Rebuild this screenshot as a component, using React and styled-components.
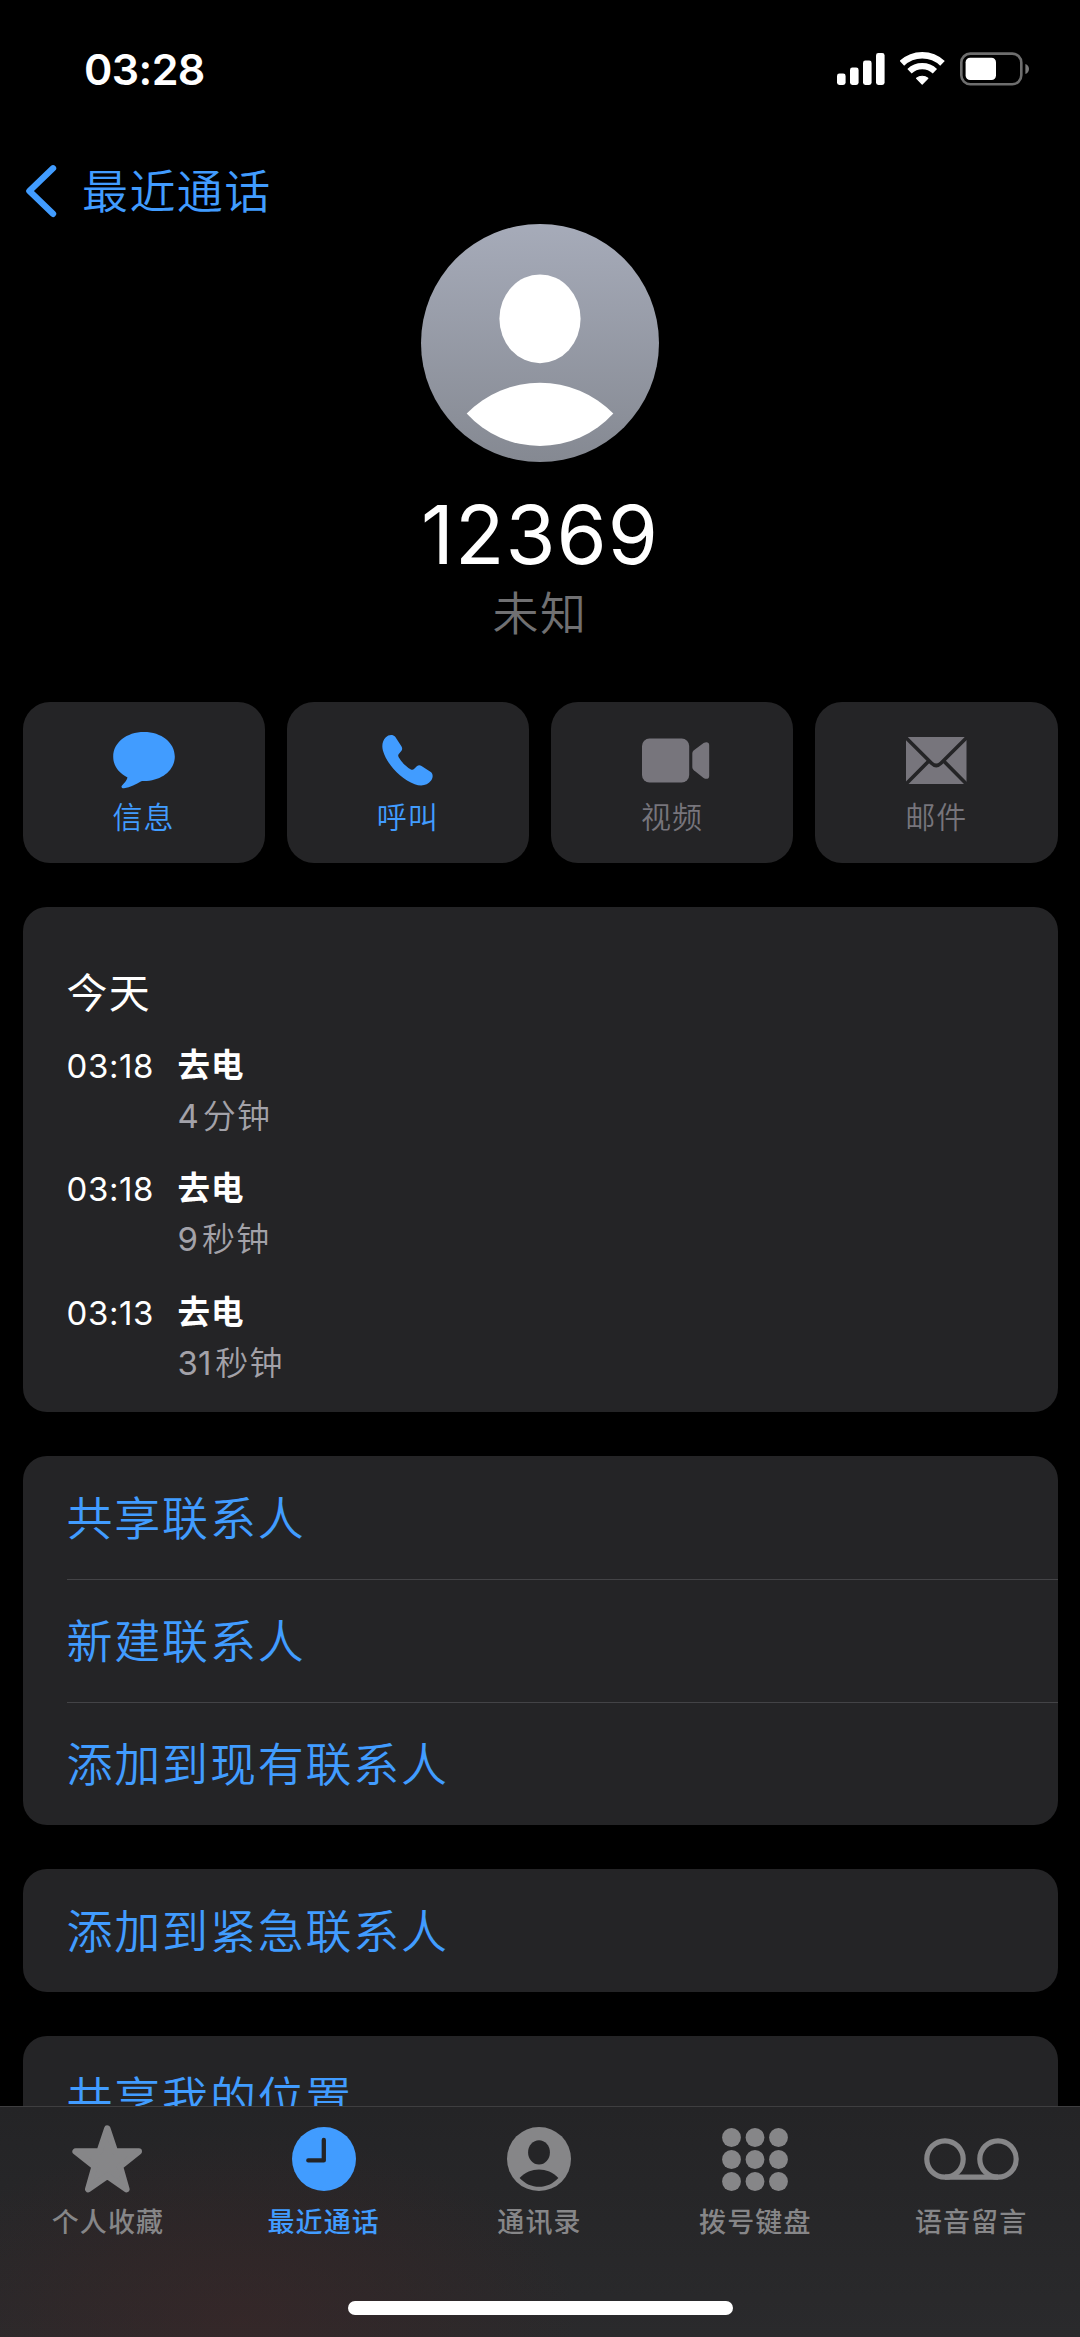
import React from "react";
import styled, { createGlobalStyle } from "styled-components";

const blue = "#419cff";
const card = "#242426";
const dim = "#77757c";
const tabGray = "#868688";

const GlobalStyle = createGlobalStyle`
  * { box-sizing: border-box; }
  html, body { margin: 0; padding: 0; background: #000; }
  body {
    font-family: Inter, "Noto Sans CJK SC", sans-serif;
    -webkit-font-smoothing: antialiased;
  }
  svg { display: block; flex: none; }
`;

const Screen = styled.div`
  width: 1080px;
  height: 2337px;
  display: flex;
  flex-direction: column;
  overflow: hidden;
  background: #000;
  color: #fff;
`;

const StatusBar = styled.div`
  flex: none;
  height: 137px;
  padding: 0 51px 0 84px;
  display: flex;
  align-items: center;
  justify-content: space-between;
`;

const Clock = styled.div`
  font-size: 43px;
  font-weight: 600;
  letter-spacing: -0.6px;
  line-height: 50px;
`;

const StatusIcons = styled.div`
  display: flex;
  align-items: center;
`;

const WifiSlot = styled.div`
  margin: 0 15px 0 15px;
`;

const NavBar = styled.nav`
  flex: none;
  height: 87px;
  padding: 21px 0 0 25px;
  display: flex;
  align-items: center;
  color: ${blue};
`;

const BackLabel = styled.span`
  margin-left: 24px;
  font-size: 46px;
  font-weight: 350;
  letter-spacing: 1.4px;
  line-height: 60px;
`;

const Content = styled.main`
  flex: none;
  height: 1882px;
  overflow: hidden;
  display: flex;
  flex-direction: column;
  align-items: center;
`;

const Name = styled.h1`
  margin: 28px 0 0;
  font-size: 81px;
  font-weight: 400;
  letter-spacing: 1px;
  line-height: 90px;
`;

const Subtitle = styled.div`
  margin-top: 3px;
  font-size: 46px;
  font-weight: 350;
  letter-spacing: 1.6px;
  line-height: 60px;
  color: #707072;
`;

const Body = styled.div`
  width: 1035px;
  margin-top: 59px;
  display: flex;
  flex-direction: column;
  gap: 44px;
`;

const Actions = styled.div`
  display: grid;
  grid-template-columns: repeat(4, 1fr);
  gap: 22px;
`;

const Action = styled.div`
  height: 161px;
  border-radius: 27px;
  background: ${card};
  color: ${(p) => (p.$enabled ? blue : dim)};
  display: flex;
  flex-direction: column;
  align-items: center;
  padding-top: 25px;
`;

const ActionIcon = styled.div`
  height: 67px;
  padding-bottom: 1px;
  padding-left: ${(p) => p.$inset || 0}px;
  display: flex;
  align-items: center;
  justify-content: center;
`;

const ActionLabel = styled.div`
  font-size: 30px;
  font-weight: 350;
  letter-spacing: 1.2px;
  line-height: 46px;
`;

const Card = styled.section`
  background: ${card};
  border-radius: 24px;
  overflow: hidden;
`;

const HistoryCard = styled(Card)`
  height: 505px;
  padding: 56px 44px 0;
`;

const HistoryTitle = styled.h2`
  margin: 0 0 17.6px;
  font-size: 41px;
  font-weight: 400;
  letter-spacing: 1.2px;
  line-height: 60px;
`;

const Calls = styled.div`
  display: flex;
  flex-direction: column;
  gap: 22.6px;
`;

const Call = styled.div`
  display: grid;
  grid-template-columns: 111px auto;
  grid-template-rows: 50px 51px;
  font-size: 33px;
  line-height: 50px;
`;

const CallTime = styled.span`
  letter-spacing: 0.6px;
`;

const CallType = styled.span`
  font-size: 32.5px;
  font-weight: 700;
  letter-spacing: 1.1px;
`;

const CallLength = styled.span`
  grid-column: 2;
  color: #a3a2a9;
  font-weight: 350;
  letter-spacing: 1.2px;
  line-height: 51px;
`;

const CallNumber = styled.span`
  font-weight: 400;
  letter-spacing: 0;
  margin-right: 4px;
`;

const LinkRow = styled.div`
  height: 123px;
  margin-left: 44px;
  display: flex;
  align-items: center;
  color: ${blue};
  font-size: 46px;
  font-weight: 350;
  letter-spacing: 1.8px;
  line-height: 60px;
  & + & {
    border-top: 1px solid #434346;
  }
`;

const TabBar = styled.footer`
  flex: none;
  height: 231px;
  border-top: 1px solid #3e3e40;
  background:
    radial-gradient(ellipse 340px 190px at 240px 215px, rgba(70, 36, 36, 0.38) 0%, rgba(62, 36, 36, 0.28) 50%, rgba(36, 36, 38, 0) 100%),
    linear-gradient(to bottom, #242426, #2a2a2c);
  display: flex;
  flex-direction: column;
  align-items: center;
`;

const Tabs = styled.div`
  width: 1080px;
  height: 194px;
  padding-right: 1px;
  display: grid;
  grid-template-columns: repeat(5, 1fr);
`;

const Tab = styled.div`
  display: flex;
  flex-direction: column;
  align-items: center;
  padding-top: 14px;
  color: ${(p) => (p.$active ? blue : tabGray)};
`;

const TabIcon = styled.div`
  height: 76px;
  display: flex;
  align-items: center;
`;

const TabLabel = styled.div`
  margin-top: 6px;
  font-size: 27px;
  font-weight: 500;
  letter-spacing: 1.1px;
  line-height: 40px;
`;

const HomeIndicator = styled.div`
  width: 385px;
  height: 14px;
  border-radius: 7px;
  background: #fff;
`;

const SignalIcon = () => (
  <svg width="48" height="34" viewBox="0 0 48 34" fill="#fff">
    <rect x="0" y="21.5" width="8.6" height="11.5" rx="2.4" />
    <rect x="13" y="15.5" width="8.6" height="17.5" rx="2.4" />
    <rect x="26" y="8.5" width="8.6" height="24.5" rx="2.4" />
    <rect x="39" y="1" width="8.6" height="32" rx="2.4" />
  </svg>
);

const WifiIcon = () => (
  <svg width="45" height="35" viewBox="0 0 45 35" fill="none" stroke="#fff">
    <path d="M1.9 12.3A29.5 29.5 0 0 1 42.5 12.3" strokeWidth="6.6" />
    <path d="M9.5 20.3A18.4 18.4 0 0 1 34.9 20.3" strokeWidth="6.2" />
    <path d="M16.6 27.3A8.6 8.6 0 0 1 27.8 27.3L22.2 33Z" fill="#fff" strokeWidth="1.2" strokeLinejoin="round" />
  </svg>
);

const BatteryIcon = () => (
  <svg width="69" height="34" viewBox="0 0 69 34">
    <rect x="1.3" y="1.6" width="60" height="30.6" rx="9" fill="none" stroke="#6e6e6e" strokeWidth="2.6" />
    <rect x="5.6" y="5.8" width="30.4" height="22.2" rx="4.5" fill="#fff" />
    <path d="M65.4 12C70.2 13.6 70.2 20.4 65.4 22Z" fill="#7a7a7a" />
  </svg>
);

const BackIcon = () => (
  <svg width="33" height="54" viewBox="0 0 33 54" fill="none" stroke={blue} strokeWidth="6.4" strokeLinecap="round" strokeLinejoin="round">
    <path d="M28 4.3L4.4 27L28 49.8" />
  </svg>
);

const Avatar = () => (
  <svg width="238" height="238" viewBox="0 0 238 238">
    <defs>
      <linearGradient id="avatarShade" x1="0" y1="0" x2="0" y2="1">
        <stop offset="0" stopColor="#a6abb9" />
        <stop offset="1" stopColor="#858992" />
      </linearGradient>
    </defs>
    <circle cx="119" cy="119" r="119" fill="url(#avatarShade)" />
    <ellipse cx="119" cy="94.8" rx="40.6" ry="44.4" fill="#fff" />
    <path d="M45.7 189.5A102.6 102.6 0 0 1 192.3 189.5A98.9 98.9 0 0 1 45.7 189.5Z" fill="#fff" />
  </svg>
);

const MessageIcon = () => (
  <svg width="62" height="57" viewBox="0 0 62 57" fill="currentColor">
    <path d="M31 0C48.5 0 61.8 10.6 61.8 24.5S48.5 49 31 49C30 49 29.2 49 28.2 49.2C23 52 17.5 55.4 11 56.3C8.6 56.5 7.8 55 9 53.4C11.5 50.8 13.6 48.6 14.5 45.4C6 41 0.2 34.2 0.2 24.5C0.2 10.6 13.5 0 31 0Z" />
  </svg>
);

const PhoneIcon = () => (
  <svg width="51" height="51" viewBox="0 0 51 51" fill="currentColor">
    <path d="M3.6 2.6C6.6 -0.6 11 -0.6 13.2 1.8L19.4 11.2C20.5 13 20.4 14.6 19.3 15.9L16.8 18.9C16 20 16 20.8 16.7 22.2C19.5 27.2 23.9 31.6 28.9 34.4C30.2 35.1 31 35 32 34.1L34.8 31.3C36.3 30 37.9 30 39.5 31L48.8 37C51.3 38.8 51.2 42.8 48.9 45.8C45.4 50.3 39.5 51.8 32.7 49.2C18.5 43.6 5.2 30 0.9 15.4C-0.4 10.6 0.5 5.8 3.6 2.6Z" />
  </svg>
);

const VideoIcon = () => (
  <svg width="68" height="45" viewBox="0 0 68 45" fill="currentColor">
    <rect x="0" y="0.5" width="47.2" height="44" rx="7.5" />
    <path d="M50.3 15.8C50.3 14.2 50.8 13.2 51.9 12.2L61.6 5.1C64.2 3.4 67.2 4 67.2 7V38C67.2 41 64.2 41.6 61.6 39.9L51.9 32.3C50.8 31.4 50.3 30.4 50.3 28.8Z" />
  </svg>
);

const MailIcon = () => (
  <svg width="61" height="47" viewBox="0 0 61 47">
    <rect width="60.5" height="47" rx="2" fill="currentColor" />
    <g fill="none" stroke={card} strokeWidth="3.6">
      <path d="M-1 -0.2L25.6 26.2Q30.2 30.8 34.9 26.2L61.5 -0.2" />
      <path d="M-1 48L22.6 24.2M61.5 48L37.9 24.2" />
    </g>
  </svg>
);

const StarIcon = () => (
  <svg width="71" height="68" viewBox="0 0 71 68" fill="currentColor" stroke="currentColor" strokeWidth="6.4" strokeLinejoin="round">
    <path d="M35.3 3.5L43 26.5H66.8L48 41.5L54.4 64.2L35.3 50.8L16.2 64.2L22.6 41.5L3.6 26.5H27.6Z" />
  </svg>
);

const RecentIcon = () => (
  <svg width="64" height="64" viewBox="0 0 64 64">
    <circle cx="32" cy="32" r="32" fill="currentColor" />
    <path d="M31.8 13V33.4H16.3" fill="none" stroke="#242426" strokeWidth="4.3" strokeLinecap="round" strokeLinejoin="round" />
  </svg>
);

const ContactIcon = () => (
  <svg width="64" height="64" viewBox="0 0 64 64">
    <circle cx="32" cy="32" r="32" fill="currentColor" />
    <ellipse cx="32" cy="25.4" rx="10.9" ry="12.1" fill="#252527" />
    <path d="M12.6 51C23.5 39.8 40.5 39.8 51.4 51C40.5 62.8 23.5 62.8 12.6 51Z" fill="#252527" />
  </svg>
);

const KeypadIcon = () => (
  <svg width="66" height="63" viewBox="0 0 66 63" fill="currentColor">
    {[9.5, 31.5, 53.5].map((y) =>
      [9.5, 33, 56.5].map((x) => <circle key={`${x}-${y}`} cx={x} cy={y} r="9.4" />)
    )}
  </svg>
);

const VoicemailIcon = () => (
  <svg width="95" height="42" viewBox="0 0 95 42" fill="none" stroke="currentColor" strokeWidth="5.2">
    <circle cx="21" cy="21" r="18.2" />
    <circle cx="74" cy="21" r="18.2" />
    <path d="M21 39.2H74" />
  </svg>
);

const actions = [
  { label: "信息", icon: MessageIcon, enabled: true },
  { label: "呼叫", icon: PhoneIcon, enabled: true },
  { label: "视频", icon: VideoIcon, enabled: false, inset: 8 },
  { label: "邮件", icon: MailIcon, enabled: false },
];

const calls = [
  { time: "03:18", type: "去电", amount: "4", unit: "分钟" },
  { time: "03:18", type: "去电", amount: "9", unit: "秒钟" },
  { time: "03:13", type: "去电", amount: "31", unit: "秒钟" },
];

const groups = [
  ["共享联系人", "新建联系人", "添加到现有联系人"],
  ["添加到紧急联系人"],
  ["共享我的位置"],
];

const tabs = [
  { label: "个人收藏", icon: StarIcon },
  { label: "最近通话", icon: RecentIcon, active: true },
  { label: "通讯录", icon: ContactIcon },
  { label: "拨号键盘", icon: KeypadIcon },
  { label: "语音留言", icon: VoicemailIcon },
];

export default function App() {
  return (
    <Screen>
      <GlobalStyle />
      <StatusBar>
        <Clock>03:28</Clock>
        <StatusIcons>
          <SignalIcon />
          <WifiSlot>
            <WifiIcon />
          </WifiSlot>
          <BatteryIcon />
        </StatusIcons>
      </StatusBar>
      <NavBar>
        <BackIcon />
        <BackLabel>最近通话</BackLabel>
      </NavBar>
      <Content>
        <Avatar />
        <Name>12369</Name>
        <Subtitle>未知</Subtitle>
        <Body>
          <Actions>
            {actions.map(({ label, icon: Icon, enabled, inset }) => (
              <Action key={label} $enabled={enabled}>
                <ActionIcon $inset={inset}>
                  <Icon />
                </ActionIcon>
                <ActionLabel>{label}</ActionLabel>
              </Action>
            ))}
          </Actions>
          <HistoryCard>
            <HistoryTitle>今天</HistoryTitle>
            <Calls>
              {calls.map((c, i) => (
                <Call key={i}>
                  <CallTime>{c.time}</CallTime>
                  <CallType>{c.type}</CallType>
                  <CallLength>
                    <CallNumber>{c.amount}</CallNumber>
                    {c.unit}
                  </CallLength>
                </Call>
              ))}
            </Calls>
          </HistoryCard>
          {groups.map((rows) => (
            <Card key={rows[0]}>
              {rows.map((row) => (
                <LinkRow key={row}>{row}</LinkRow>
              ))}
            </Card>
          ))}
        </Body>
      </Content>
      <TabBar>
        <Tabs>
          {tabs.map(({ label, icon: Icon, active }) => (
            <Tab key={label} $active={active}>
              <TabIcon>
                <Icon />
              </TabIcon>
              <TabLabel>{label}</TabLabel>
            </Tab>
          ))}
        </Tabs>
        <HomeIndicator />
      </TabBar>
    </Screen>
  );
}
